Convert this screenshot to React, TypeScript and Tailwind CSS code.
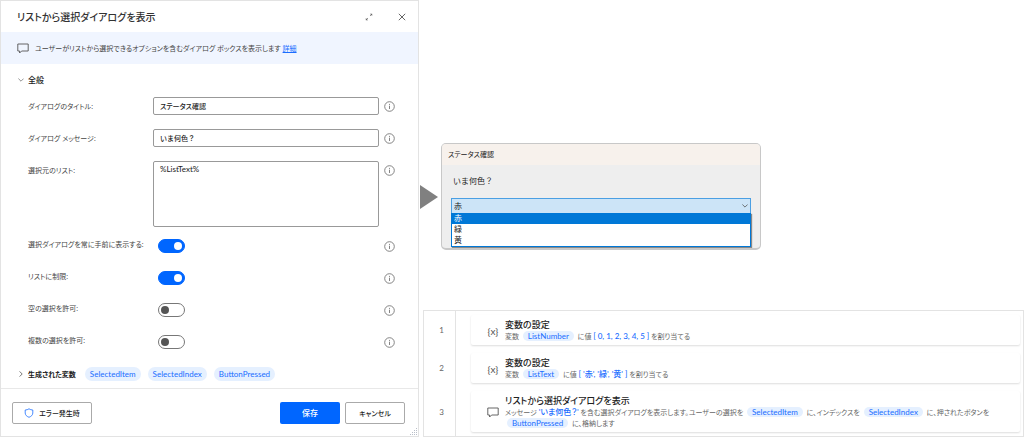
import { useState } from 'react';
import type { ReactNode } from 'react';

interface ToggleOption {
  id: string;
  label: string;
  checked: boolean;
}

const toggleOptions: ToggleOption[] = [
  { id: 'always-on-top', label: '選択ダイアログを常に手前に表示する:', checked: true },
  { id: 'limit-to-list', label: 'リストに制限:', checked: true },
  { id: 'allow-empty', label: '空の選択を許可:', checked: false },
  { id: 'allow-multiple', label: '複数の選択を許可:', checked: false },
];

const producedVariables = ['SelectedItem', 'SelectedIndex', 'ButtonPressed'];
const colors = ['赤', '緑', '黄'];

function InfoButton() {
  return (
    <button type="button" aria-label="情報" className="h-[11px] w-[11px] text-[#777]">
      <svg viewBox="0 0 11 11" className="h-[11px] w-[11px]" fill="none" stroke="currentColor">
        <circle cx="5.5" cy="5.5" r="4.8" strokeWidth="0.9" />
        <path d="M5.5 4.7v3.3M5.5 2.9v1" strokeWidth="0.9" />
      </svg>
    </button>
  );
}

function MessageIcon() {
  return (
    <svg viewBox="0 0 12 11" className="h-[11px] w-3 shrink-0" fill="none" stroke="#555" strokeWidth="0.9">
      <path d="M0.8 1h10.4v7H4.6L2.6 10V8H0.8z" strokeLinejoin="round" />
    </svg>
  );
}

function Pill({ children }: { children: ReactNode }) {
  return <span className="mx-[2px] rounded-full bg-[#e5f0ff] px-[5px] text-[8px] text-[#1a6dff]">{children}</span>;
}

function Literal({ children }: { children: ReactNode }) {
  return <span className="text-[8px] font-medium text-[#1a6dff]">{children}</span>;
}

function Toggle({ option }: { option: ToggleOption }) {
  const [on, setOn] = useState(option.checked);
  return (
    <div className="grid grid-cols-[130px_1fr_11px] items-center">
      <label htmlFor={option.id} className="-mt-1 whitespace-nowrap leading-[10px]">{option.label}</label>
      <input
        id={option.id}
        type="checkbox"
        role="switch"
        checked={on}
        onChange={(e) => setOn(e.target.checked)}
        className="flex h-[14px] w-[27px] appearance-none items-center rounded-full border border-[#777] bg-white px-[2px] before:h-2 before:w-2 before:rounded-full before:bg-[#555] checked:justify-end checked:border-[#0066ff] checked:bg-[#0066ff] checked:before:bg-white"
      />
      <InfoButton />
    </div>
  );
}

function ActionDialog() {
  const [title, setTitle] = useState('ステータス確認');
  const [message, setMessage] = useState('いま何色？');
  const [list, setList] = useState('%ListText%');

  return (
    <section className="flex flex-col border border-[#e3e3e3] bg-white">
      {/* Header */}
      <header className="flex h-[31px] items-center justify-between pl-4 pr-[11px]">
        <h1 className="text-[10px] font-medium text-[#333]">リストから選択ダイアログを表示</h1>
        <div className="flex items-center gap-6 text-[#666]">
          <button type="button" aria-label="展開">
            <svg viewBox="0 0 8 8" className="h-2 w-2" fill="currentColor" stroke="currentColor" strokeWidth="0.7">
              <path d="M5 3l1.6-1.6M3 5L1.4 6.6" />
              <path d="M4.9 0.8h2.3v2.3zM0.8 4.9v2.3h2.3z" stroke="none" />
            </svg>
          </button>
          <button type="button" aria-label="閉じる">
            <svg viewBox="0 0 10 10" className="h-[10px] w-[10px]" fill="none" stroke="currentColor">
              <path d="M1.8 1.8l6.4 6.4M8.2 1.8l-6.4 6.4" />
            </svg>
          </button>
        </div>
      </header>

      <div className="flex h-8 items-center gap-[6px] bg-[#f0f5ff] pl-4">
        <MessageIcon />
        <p>
          ユーザーがリストから選択できるオプションを含むダイアログ ボックスを表示します{' '}
          <a href="#details" className="text-[#1a6dff] underline">詳細</a>
        </p>
      </div>

      {/* Parameters */}
      <div className="flex-1 pl-[27px] pr-[23px] pt-[10px]">
        <button type="button" className="-ml-[10px] flex h-3 items-center gap-1 text-[8px] font-medium text-[#222]">
          <svg viewBox="0 0 6 6" className="h-[6px] w-[6px]" fill="none" stroke="#777" strokeWidth="0.8">
            <path d="M0.4 1.6L3 4.2l2.6-2.6" />
          </svg>
          全般
        </button>

        <div className="flex flex-col gap-[14px] pt-[11px]">
          <div className="grid grid-cols-[125px_1fr_16px] items-center">
            <label htmlFor="dialog-title">ダイアログのタイトル:</label>
            <input
              id="dialog-title"
              value={title}
              onChange={(e) => setTitle(e.target.value)}
              className="h-[18px] min-w-0 rounded-[2px] border border-[#999] px-[6px] font-medium text-[#222]"
            />
            <span className="flex justify-end"><InfoButton /></span>
          </div>
          <div className="grid grid-cols-[125px_1fr_16px] items-center">
            <label htmlFor="dialog-message">ダイアログ メッセージ:</label>
            <input
              id="dialog-message"
              value={message}
              onChange={(e) => setMessage(e.target.value)}
              className="h-[18px] min-w-0 rounded-[2px] border border-[#999] px-[6px] font-medium text-[#222] [font-feature-settings:normal]"
            />
            <span className="flex justify-end"><InfoButton /></span>
          </div>
          <div className="grid grid-cols-[125px_1fr_16px] items-start">
            <label htmlFor="source-list" className="pt-[3px]">選択元のリスト:</label>
            <textarea
              id="source-list"
              value={list}
              onChange={(e) => setList(e.target.value)}
              className="h-[66px] min-w-0 resize-none rounded-[2px] border border-[#999] px-[6px] py-px text-[8px] text-[#222]"
            />
            <span className="flex justify-end pt-1"><InfoButton /></span>
          </div>
        </div>

        <div className="flex flex-col gap-[18px] pt-3">
          {toggleOptions.map((option) => (
            <Toggle key={option.id} option={option} />
          ))}
        </div>

        <div className="-ml-[10px] flex items-center gap-[7px] pb-[7px] pt-[18px] text-[8px] text-[#222]">
          <button type="button" className="flex items-center gap-1 pr-[2px] text-[7px] font-bold">
            <svg viewBox="0 0 6 6" className="h-[6px] w-[6px]" fill="none" stroke="#555" strokeWidth="0.8">
              <path d="M1.6 0.4L4.2 3 1.6 5.6" />
            </svg>
            生成された変数
          </button>
          {producedVariables.map((name) => (
            <span key={name} className="rounded-full bg-[#e5f0ff] px-[5px] leading-[14px] text-[#1a6dff]">{name}</span>
          ))}
        </div>
      </div>

      {/* Footer */}
      <footer className="relative flex items-center gap-[5px] border-t border-[#e8e8e8] pb-3 pl-[11px] pr-[13px] pt-[13px] font-medium text-[#222]">
        <button type="button" className="mr-auto flex h-[22px] w-20 items-center justify-center gap-[5px] rounded-[2px] border border-[#aaa]">
          <svg viewBox="0 0 10 10" className="h-[10px] w-[10px]" fill="none" stroke="#1a6dff" strokeWidth="0.8">
            <path d="M5 0.8C3.9 1.6 2.6 2 1.2 2v3c0 2 1.5 3.4 3.8 4.3C7.3 8.4 8.8 7 8.8 5V2C7.4 2 6.1 1.6 5 0.8z" />
          </svg>
          エラー発生時
        </button>
        <button type="button" className="h-[22px] w-[60px] rounded-[2px] bg-[#0066ff] text-[8px] text-white">保存</button>
        <button type="button" className="h-[22px] w-[60px] rounded-[2px] border border-[#aaa]">キャンセル</button>
        <svg viewBox="0 0 8 8" className="absolute bottom-0 right-0 h-2 w-2" fill="#b9bfc9">
          <path d="M6 0h1v1H6zM4 2h1v1H4zM6 2h1v1H6zM2 4h1v1H2zM4 4h1v1H4zM6 4h1v1H6zM0 6h1v1H0zM2 6h1v1H2zM4 6h1v1H4zM6 6h1v1H6z" />
        </svg>
      </footer>
    </section>
  );
}

function PreviewDialog() {
  const [color, setColor] = useState('赤');
  return (
    <section className="w-[53%] overflow-hidden rounded-[5px] border border-b-2 border-[#c8c8c8] bg-[#eee] text-[#222]">
      <h2 className="h-[21px] bg-[#f7f1ec] pl-[6px] leading-[21px]">ステータス確認</h2>
      <div className="px-[9px] pb-[34px] pt-[10px] text-[8px] [font-feature-settings:normal]">
        <label htmlFor="color" className="block pb-[11px] pl-[2px] leading-3">いま何色？</label>
        <div className="relative">
          <select
            id="color"
            value={color}
            onChange={(e) => setColor(e.target.value)}
            className="block h-4 w-full appearance-none border border-[#4a9fe3] bg-[#cce4f7] px-[2px]"
          >
            {colors.map((c) => (
              <option key={c}>{c}</option>
            ))}
          </select>
          <svg viewBox="0 0 6 4" className="absolute right-[3px] top-[6px] h-1 w-[6px]" fill="none" stroke="#555" strokeWidth="0.8">
            <path d="M0.4 0.5L3 3.1 5.6 0.5" />
          </svg>
          <ul className="absolute inset-x-0 top-[15px] border border-t-0 border-[#0078d7] bg-white shadow-[1px_1px_1px_#888]">
            {colors.map((c) => (
              <li
                key={c}
                onClick={() => setColor(c)}
                className={c === color ? 'bg-[#0078d7] pl-[2px] leading-[11px] text-white' : 'pl-[2px] leading-[11px]'}
              >
                {c}
              </li>
            ))}
          </ul>
        </div>
      </div>
    </section>
  );
}

interface StepProps {
  number: number;
  icon: ReactNode;
  title: string;
  children: ReactNode;
}

function Step({ number, icon, title, children }: StepProps) {
  return (
    <li className="flex">
      <span className="flex w-8 shrink-0 items-center justify-center border-r border-[#e3e3e3] pl-1 text-[8px] text-[#666]">
        {number}
      </span>
      <div className="flex-1 py-1 pl-[15px] pr-[3px]">
        <div className="flex items-center gap-[6px] rounded-[2px] pb-[3px] pl-4 pt-1 shadow-[0_1px_2px_#ddd]">
          <span className="flex w-3 shrink-0 justify-center text-[10px] text-[#555]">{icon}</span>
          <div>
            <h3 className="text-[9px] font-medium leading-3 text-[#222]">{title}</h3>
            <p className="leading-[11px] text-[#666]">{children}</p>
          </div>
        </div>
      </div>
    </li>
  );
}

function StepList() {
  return (
    <ol className="ml-1 border border-[#e3e3e3]">
      <Step number={1} icon={'{x}'} title="変数の設定">
        変数 <Pill>ListNumber</Pill> に値 <Literal>[ 0, 1, 2, 3, 4, 5 ]</Literal> を割り当てる
      </Step>
      <Step number={2} icon={'{x}'} title="変数の設定">
        変数 <Pill>ListText</Pill> に値 <Literal>[ '赤', '緑', '黄' ]</Literal> を割り当てる
      </Step>
      <Step number={3} icon={<MessageIcon />} title="リストから選択ダイアログを表示">
        メッセージ <Literal>'いま何色？'</Literal> を含む選択ダイアログを表示します。ユーザーの選択を{' '}
        <Pill>SelectedItem</Pill> に、インデックスを <Pill>SelectedIndex</Pill> に、押されたボタンを <br />
        <Pill>ButtonPressed</Pill> に、格納します
      </Step>
    </ol>
  );
}

export default function App() {
  return (
    <main className="grid grid-cols-[419fr_605fr] bg-white font-['Lato','Noto_Sans_CJK_JP',sans-serif] text-[7px] leading-3 text-[#444] [font-feature-settings:'palt']">
      <ActionDialog />
      <div className="flex flex-col justify-between pt-[143px]">
        <div className="flex items-center gap-[3px] pl-px">
          <svg viewBox="0 0 18 24" className="h-6 w-[18px] shrink-0" fill="#808080">
            <path d="M0 0l18 12L0 24z" />
          </svg>
          <PreviewDialog />
        </div>
        <StepList />
      </div>
    </main>
  );
}
